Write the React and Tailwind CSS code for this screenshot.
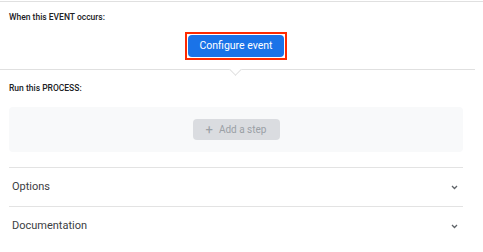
import React from 'react';

function Chevron() {
  return (
    <svg width="7" height="5" viewBox="0 0 7 5" className="text-[#5f6368]">
      <path d="M1 1 L3.5 3.5 L6 1" fill="none" stroke="currentColor" strokeWidth="1.3" />
    </svg>
  );
}

function Row({ title, last }) {
  return (
    <div className={`flex h-[39px] items-center justify-between pl-[3px] pr-[5px] ${last ? '' : 'border-b border-[#e3e3e3]'}`}>
      <span className="text-[11px] text-[#3c4043]">{title}</span>
      <Chevron />
    </div>
  );
}

export default function App() {
  return (
    <div className="h-[252px] w-[483px] overflow-hidden bg-white font-['Roboto',sans-serif]">
      <div className="mt-px border-t border-[#e0e0e0]" />

      <div className="flex h-[67px] flex-col pl-[9px] pr-[20px]">
        <p className="mt-[9px] text-[8.5px] font-medium leading-[12px] text-[#202124]">When this EVENT occurs:</p>
        <div className="mt-[9px] flex justify-center">
          <div className="border-2 border-[#ff2a00] bg-white p-px">
            <button className="flex h-[22px] w-[96px] items-center justify-center rounded-sm bg-[#1a73e8] text-[10.5px] text-white">
              Configure event
            </button>
          </div>
        </div>
      </div>

      <div className="relative w-[475px] border-t border-[#e0e0e0]">
        <div className="absolute left-[231px] top-[-5px] h-[9px] w-[9px] rotate-45 border-b border-r border-[#e0e0e0] bg-white" />
      </div>

      <div className="pl-[9px] pr-[20px]">
        <p className="mt-[12px] text-[8.5px] font-medium leading-[12px] text-[#202124]">Run this PROCESS:</p>
        <div className="mt-[13px] flex h-[45px] items-center justify-center rounded bg-[#f8f9fa]">
          <div className="flex h-[21px] w-[87px] items-center justify-center gap-[6px] rounded-sm bg-[#dadce0] text-[10px] text-[#9aa0a6]">
            <span className="text-[13px] leading-none">+</span>
            <span>Add a step</span>
          </div>
        </div>
        <div className="mt-[15px] border-t border-[#e3e3e3]">
          <Row title="Options" />
          <Row title="Documentation" last />
        </div>
      </div>
    </div>
  );
}
